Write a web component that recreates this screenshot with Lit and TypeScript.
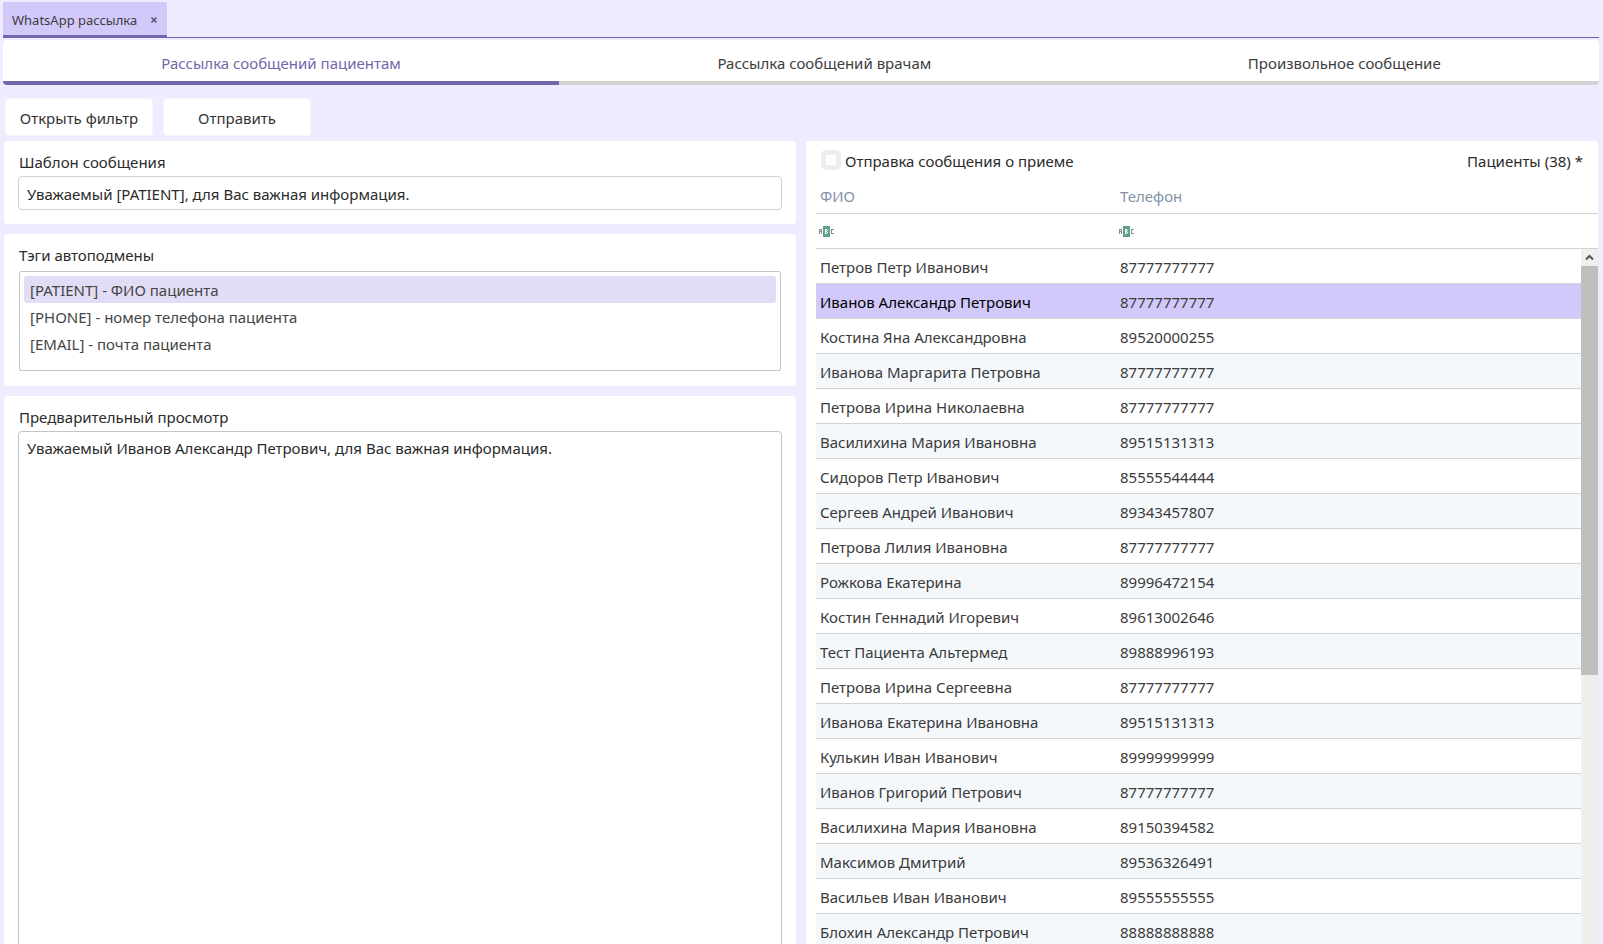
import { LitElement, html, css, svg } from "lit";
import { customElement, state } from "lit/decorators.js";
import { classMap } from "lit/directives/class-map.js";

interface Patient {
  name: string;
  phone: string;
}

const SECTIONS = [
  "Рассылка сообщений пациентам",
  "Рассылка сообщений врачам",
  "Произвольное сообщение",
];

const TAGS = [
  "[PATIENT] - ФИО пациента",
  "[PHONE] - номер телефона пациента",
  "[EMAIL] - почта пациента",
];

const PATIENTS: Patient[] = [
  { name: "Петров Петр Иванович", phone: "87777777777" },
  { name: "Иванов Александр Петрович", phone: "87777777777" },
  { name: "Костина Яна Александровна", phone: "89520000255" },
  { name: "Иванова Маргарита Петровна", phone: "87777777777" },
  { name: "Петрова Ирина Николаевна", phone: "87777777777" },
  { name: "Василихина Мария Ивановна", phone: "89515131313" },
  { name: "Сидоров Петр Иванович", phone: "85555544444" },
  { name: "Сергеев Андрей Иванович", phone: "89343457807" },
  { name: "Петрова Лилия Ивановна", phone: "87777777777" },
  { name: "Рожкова Екатерина", phone: "89996472154" },
  { name: "Костин Геннадий Игоревич", phone: "89613002646" },
  { name: "Тест Пациента Альтермед", phone: "89888996193" },
  { name: "Петрова Ирина Сергеевна", phone: "87777777777" },
  { name: "Иванова Екатерина Ивановна", phone: "89515131313" },
  { name: "Кулькин Иван Иванович", phone: "89999999999" },
  { name: "Иванов Григорий Петрович", phone: "87777777777" },
  { name: "Василихина Мария Ивановна", phone: "89150394582" },
  { name: "Максимов Дмитрий", phone: "89536326491" },
  { name: "Васильев Иван Иванович", phone: "89555555555" },
  { name: "Блохин Александр Петрович", phone: "88888888888" },
];

@customElement("patient-grid")
export class PatientGrid extends LitElement {
  @state() private selected = 1;

  static styles = css`
    :host {
      display: flex;
      flex-direction: column;
      flex: 1;
      min-height: 0;
    }
    .grid {
      width: 100%;
      border-collapse: separate;
      border-spacing: 0;
      table-layout: fixed;
    }
    .name-col {
      width: 300px;
    }
    .cell {
      height: 35px;
      box-sizing: border-box;
      padding: 2px 4px 0;
      border-bottom: 1px solid #d3d3d3;
      text-align: left;
      font-weight: 400;
      line-height: 20px;
      white-space: nowrap;
    }
    .title {
      padding-top: 0;
      color: #8192a6;
    }
    .filter {
      padding: 2px 3px 0;
    }
    .filter-box {
      display: flex;
      align-items: center;
    }
    .filter-input {
      flex: 1;
      min-width: 0;
      height: 24px;
      border: 0;
      outline: 0;
      background: none;
      font: inherit;
    }
    .icon {
      display: block;
      flex: none;
    }
    .body {
      display: flex;
      flex: 1;
      min-height: 0;
    }
    .rows {
      flex: 1;
      min-width: 0;
      overflow: hidden;
    }
    .row {
      color: #3b3b3b;
    }
    .row:nth-child(even) {
      background: #f4f8fb;
    }
    .row.selected {
      background: #d2c9fa;
    }
    .row.selected .name {
      color: #000;
    }
    .scroll {
      display: flex;
      flex-direction: column;
      width: 17px;
      background: #efefef;
    }
    .arrow {
      display: block;
      flex: none;
    }
    .thumb {
      flex: 567;
      background: #bfbfbf;
    }
    .rest {
      flex: 433;
    }
  `;

  private filterIcon() {
    return html`<svg class="icon" width="16" height="12" viewBox="0 0 16 12" shape-rendering="crispEdges">
      <rect x="4" y="0" width="7" height="11" fill="#5fa28c" />
      ${svg`<g fill="none" stroke-width="1">
        <path d="M0.5 8V3.5H2.5V8M1 5.5H2" stroke="#8a8a8a" />
        <path d="M6.5 3V8M6 3.5H8M6 5.5H8M6 7.5H8M8.5 4V5M8.5 6V7" stroke="#ffffff" />
        <path d="M15 3.5H12.5V7.5H15" stroke="#8a8a8a" />
      </g>`}
    </svg>`;
  }

  render() {
    const cols = html`<colgroup><col class="name-col" /><col /></colgroup>`;
    return html`
      <table class="grid">
        ${cols}
        <thead>
          <tr>
            <th class="cell title" scope="col">ФИО</th>
            <th class="cell title" scope="col">Телефон</th>
          </tr>
          <tr>
            ${["Фильтр по ФИО", "Фильтр по телефону"].map(
              (label) => html`<td class="cell filter">
                <label class="filter-box">
                  ${this.filterIcon()}
                  <input class="filter-input" type="text" aria-label=${label} />
                </label>
              </td>`,
            )}
          </tr>
        </thead>
      </table>
      <div class="body">
        <div class="rows">
          <table class="grid" aria-label="Пациенты">
            ${cols}
            <tbody>
              ${PATIENTS.map(
                (p, i) => html`<tr
                  class=${classMap({ row: true, selected: i === this.selected })}
                  @click=${() => (this.selected = i)}
                >
                  <td class="cell name">${p.name}</td>
                  <td class="cell">${p.phone}</td>
                </tr>`,
              )}
            </tbody>
          </table>
        </div>
        <div class="scroll">
          <svg class="arrow" width="17" height="17" viewBox="0 0 17 17">
            <path d="M5 10.5L8.5 7L12 10.5" fill="none" stroke="#555" stroke-width="2" />
          </svg>
          <div class="thumb"></div>
          <div class="rest"></div>
          <svg class="arrow" width="17" height="17" viewBox="0 0 17 17">
            <path d="M5 7L8.5 10.5L12 7" fill="none" stroke="#555" stroke-width="2" />
          </svg>
        </div>
      </div>
    `;
  }
}

@customElement("app-root")
export class AppRoot extends LitElement {
  @state() private section = 0;
  @state() private tag = 0;

  static styles = css`
    :host {
      display: block;
      height: 100vh;
      box-sizing: border-box;
      overflow: hidden;
      padding: 2px 4px 0 3px;
      background: #eeecff;
      color: #2b2b2b;
      font: 15px/20px "Noto Sans", "Open Sans", sans-serif;
    }
    .windows {
      display: flex;
      align-items: flex-end;
      height: 36px;
      background: linear-gradient(#7262ac, #7262ac) bottom / 100% 1px no-repeat;
    }
    .window {
      display: flex;
      align-items: center;
      gap: 13px;
      height: 36px;
      box-sizing: border-box;
      padding: 2px 9px 0;
      border-bottom: 3px solid #7566ab;
      background: #d2c9fa;
      color: #3d3d3d;
      font-size: 13px;
    }
    .close {
      display: flex;
      padding: 0;
      border: 0;
      background: none;
    }
    .sections {
      display: flex;
      margin-top: 2px;
      border-radius: 4px;
      overflow: hidden;
      background: #fff;
    }
    .section {
      flex: 1 1 auto;
      height: 45px;
      padding: 5px 0 0;
      border: 0;
      border-bottom: 4px solid #d3d3d3;
      background: none;
      color: #3d3d3d;
      font: inherit;
    }
    .section.active {
      border-color: #7566ab;
      color: #7566ab;
    }
    .actions {
      display: flex;
      gap: 10px;
      padding: 13px 2px 5px;
    }
    .action {
      min-width: 148px;
      height: 38px;
      padding: 2px 12px 0;
      border: 1px solid #f7f7f8;
      border-radius: 4px;
      background: #fff;
      color: #333;
      font: inherit;
    }
    .workspace {
      display: grid;
      grid-template-columns: 1fr 1fr;
      gap: 10px;
      height: calc(100vh - 81px);
      padding: 0 1px;
    }
    .column {
      display: flex;
      flex-direction: column;
      gap: 10px;
      min-width: 0;
      min-height: 0;
    }
    .panel {
      display: flex;
      flex-direction: column;
      box-sizing: border-box;
      padding: 11px 14px 14px;
      border-radius: 4px;
      background: #fff;
    }
    .panel.fill {
      flex: 1;
    }
    .caption {
      padding: 0 1px;
      margin-bottom: 4px;
    }
    .text {
      height: 34px;
      box-sizing: border-box;
      padding: 1px 8px 0;
      border: 1px solid #d0d0d0;
      border-radius: 4px;
      color: inherit;
      font: inherit;
      outline: 0;
    }
    .tags {
      height: 100px;
      box-sizing: border-box;
      margin: 2px 1px 1px;
      padding: 4px;
      border: 1px solid #c4c4c4;
      border-radius: 2px;
    }
    .tag {
      display: block;
      width: 100%;
      height: 27px;
      padding: 1px 6px 0;
      border: 0;
      border-radius: 3px;
      background: none;
      color: #454545;
      font: inherit;
      text-align: left;
    }
    .tag.active {
      background: #e2ddf6;
    }
    .preview {
      flex: 1;
      box-sizing: border-box;
      padding: 6px 8px;
      border: 1px solid #c4c4c4;
      border-radius: 4px;
      resize: none;
      color: inherit;
      font: inherit;
      outline: 0;
    }
    .recipients {
      padding: 9px 0 0 10px;
      min-width: 0;
      min-height: 0;
    }
    .bar {
      display: flex;
      align-items: center;
      justify-content: space-between;
      padding: 0 15px 0 5px;
      margin-bottom: 9px;
    }
    .option {
      display: flex;
      align-items: center;
      gap: 4px;
    }
    .box {
      appearance: none;
      width: 20px;
      height: 20px;
      margin: 0;
      border: 5px solid #ededed;
      border-radius: 5px;
      background: #fff;
    }
    .box:checked {
      background: #7566ab;
    }
    .bar-text {
      padding-top: 1px;
      margin-bottom: -1px;
    }
  `;

  render() {
    return html`
      <header class="windows">
        <div class="window">
          <span>WhatsApp рассылка</span>
          <button class="close" type="button" aria-label="Закрыть">
            <svg width="8" height="8" viewBox="0 0 8 8">
              <path d="M1.5 1.5L6.5 6.5M6.5 1.5L1.5 6.5" fill="none" stroke="#5a5570" stroke-width="1.6" />
            </svg>
          </button>
        </div>
      </header>
      <nav class="sections" role="tablist">
        ${SECTIONS.map(
          (title, i) => html`<button
            type="button"
            role="tab"
            aria-selected=${i === this.section}
            class=${classMap({ section: true, active: i === this.section })}
            @click=${() => (this.section = i)}
          >${title}</button>`,
        )}
      </nav>
      <div class="actions">
        <button class="action" type="button">Открыть фильтр</button>
        <button class="action" type="button">Отправить</button>
      </div>
      <main class="workspace">
        <div class="column">
          <section class="panel">
            <label class="caption" for="template">Шаблон сообщения</label>
            <input
              class="text"
              id="template"
              type="text"
              value="Уважаемый [PATIENT], для Вас важная информация."
            />
          </section>
          <section class="panel">
            <span class="caption" id="tags-caption">Тэги автоподмены</span>
            <div class="tags" role="listbox" aria-labelledby="tags-caption">
              ${TAGS.map(
                (tag, i) => html`<button
                  type="button"
                  role="option"
                  aria-selected=${i === this.tag}
                  class=${classMap({ tag: true, active: i === this.tag })}
                  @click=${() => (this.tag = i)}
                >${tag}</button>`,
              )}
            </div>
          </section>
          <section class="panel fill">
            <label class="caption" for="preview">Предварительный просмотр</label>
            <textarea
              class="preview"
              id="preview"
              .value=${"Уважаемый Иванов Александр Петрович, для Вас важная информация."}
            ></textarea>
          </section>
        </div>
        <section class="panel recipients">
          <div class="bar">
            <label class="option">
              <input class="box" type="checkbox" />
              <span class="bar-text">Отправка сообщения о приеме</span>
            </label>
            <span class="bar-text">Пациенты (38) *</span>
          </div>
          <patient-grid></patient-grid>
        </section>
      </main>
    `;
  }
}
